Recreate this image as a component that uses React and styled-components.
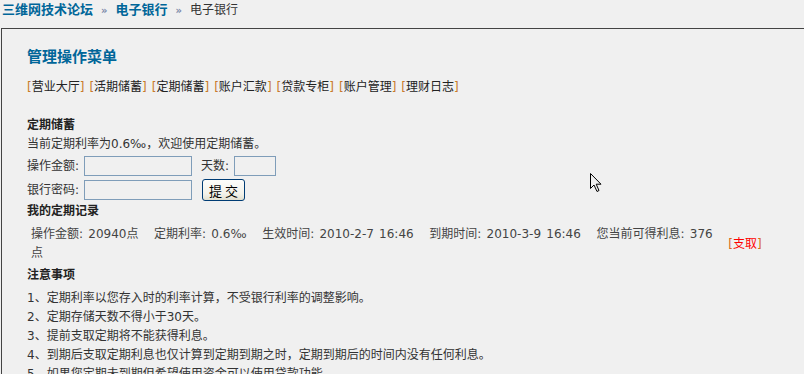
import React from "react";
import styled, { createGlobalStyle } from "styled-components";

const GlobalStyle = createGlobalStyle`
  html, body {
    margin: 0;
    padding: 0;
    background: #f0f0f0;
    overflow: hidden;
  }
  body {
    font: 12px/19px "DejaVu Sans", "Noto Sans CJK SC", sans-serif;
    color: #333;
  }
`;

const Page = styled.div`
  position: relative;
  width: 804px;
  height: 374px;
  overflow: hidden;
`;

const Crumbs = styled.div`
  padding: 0 0 0 2px;
  height: 28px;
  line-height: 20px;
  font-size: 13px;
  display: flex;
  align-items: baseline;
  gap: 8px;
  a {
    color: #006699;
    font-weight: bold;
    text-decoration: none;
  }
`;

const Sep = styled.span`
  color: #7a88a8;
  font-weight: bold;
  font-size: 10px;
`;

const Current = styled.span`
  color: #333;
  font-size: 12px;
`;

const Panel = styled.div`
  border-top: 1px solid #444;
  border-left: 1px solid #444;
  margin-left: 1px;
  padding: 18px 0 0 25px;
`;

const Title = styled.h2`
  margin: 0;
  height: 20px;
  font-size: 15px;
  line-height: 20px;
  color: #006699;
  font-weight: bold;
`;

const Menu = styled.div`
  margin-top: 11px;
  height: 19px;
  display: flex;
  gap: 5px;
`;

const MenuItem = styled.span`
  color: #222;
  &::before {
    content: "[";
    color: #c87a2a;
  }
  &::after {
    content: "]";
    color: #c87a2a;
  }
`;

const Section = styled.h3`
  margin: ${(p) => p.$top || 0}px 0 0;
  height: 19px;
  font-size: 12px;
  line-height: 19px;
  font-weight: bold;
  color: #222;
`;

const Line = styled.div`
  height: 19px;
  line-height: 19px;
`;

const FormRow = styled.div`
  height: 24px;
  display: flex;
  align-items: center;
`;

const Label = styled.span`
  margin-right: ${(p) => p.$gap || 5}px;
  margin-left: ${(p) => p.$left || 0}px;
`;

const Input = styled.input`
  box-sizing: border-box;
  width: ${(p) => p.$w}px;
  height: 20px;
  border: 1px solid #7f9db9;
  background: #f0f0f0;
  margin: 0;
  padding: 0;
`;

const Submit = styled.button`
  box-sizing: border-box;
  margin-left: 10px;
  width: 43px;
  height: 22px;
  padding: 0;
  border: 1px solid #003c74;
  border-radius: 3px;
  background: linear-gradient(#fdfdfb, #f3f2ea 70%, #e2e0d0);
  font: 13px "Noto Sans CJK SC", sans-serif;
  color: #000;
  letter-spacing: 3px;
  text-indent: 3px;
`;

const Record = styled.div`
  margin-top: 4px;
  width: 750px;
  display: flex;
  align-items: center;
`;

const RecordText = styled.div`
  width: 684px;
  padding-left: 4px;
  color: #444;
  line-height: 19px;
  word-spacing: 1.4px;
  white-space: pre-wrap;
`;

const RecordAction = styled.div`
  flex: 1;
  text-align: center;
  padding-right: 2px;
  color: #f00;
  &::before {
    content: "[";
    color: #d86a1a;
  }
  &::after {
    content: "]";
    color: #d86a1a;
  }
`;

const Notes = styled.ol`
  list-style: none;
  margin: 4px 0 0;
  padding: 0;
  li {
    height: 19px;
    line-height: 19px;
  }
`;

const Cursor = styled.svg`
  position: absolute;
  left: 589px;
  top: 172px;
`;

const menu = ["营业大厅", "活期储蓄", "定期储蓄", "账户汇款", "贷款专柜", "账户管理", "理财日志"];

const notes = [
  "定期利率以您存入时的利率计算，不受银行利率的调整影响。",
  "定期存储天数不得小于30天。",
  "提前支取定期将不能获得利息。",
  "到期后支取定期利息也仅计算到定期到期之时，定期到期后的时间内没有任何利息。",
  "如果您定期未到期但希望使用资金可以使用贷款功能。",
];

export default function App() {
  return (
    <Page>
      <GlobalStyle />
      <Crumbs>
        <a href="#">三维网技术论坛</a>
        <Sep>»</Sep>
        <a href="#">电子银行</a>
        <Sep>»</Sep>
        <Current>电子银行</Current>
      </Crumbs>
      <Panel>
        <Title>管理操作菜单</Title>
        <Menu>
          {menu.map((m) => (
            <MenuItem key={m}>{m}</MenuItem>
          ))}
        </Menu>

        <Section $top={19}>定期储蓄</Section>
        <Line>当前定期利率为0.6‰，欢迎使用定期储蓄。</Line>
        <FormRow>
          <Label>操作金额:</Label>
          <Input $w={108} />
          <Label $left={9}>天数:</Label>
          <Input $w={42} />
        </FormRow>
        <FormRow>
          <Label>银行密码:</Label>
          <Input $w={108} type="password" />
          <Submit>提交</Submit>
        </FormRow>

        <Section>我的定期记录</Section>
        <Record>
          <RecordText>
            {"操作金额: 20940点   定期利率: 0.6‰   生效时间: 2010-2-7 16:46   到期时间: 2010-3-9 16:46   您当前可得利息: 376 点"}
          </RecordText>
          <RecordAction>支取</RecordAction>
        </Record>

        <Section $top={3}>注意事项</Section>
        <Notes>
          {notes.map((n, i) => (
            <li key={i}>
              {i + 1}、{n}
            </li>
          ))}
        </Notes>
      </Panel>
      <Cursor width="13" height="21" viewBox="0 0 13 21">
        <path
          d="M1.5 1.5 L1.5 16.5 L5 13 L8 19.5 L10 18.5 L7.2 12.2 L12 12.2 Z"
          fill="#f0f0f0"
          stroke="#000"
          strokeWidth="1"
        />
      </Cursor>
    </Page>
  );
}
